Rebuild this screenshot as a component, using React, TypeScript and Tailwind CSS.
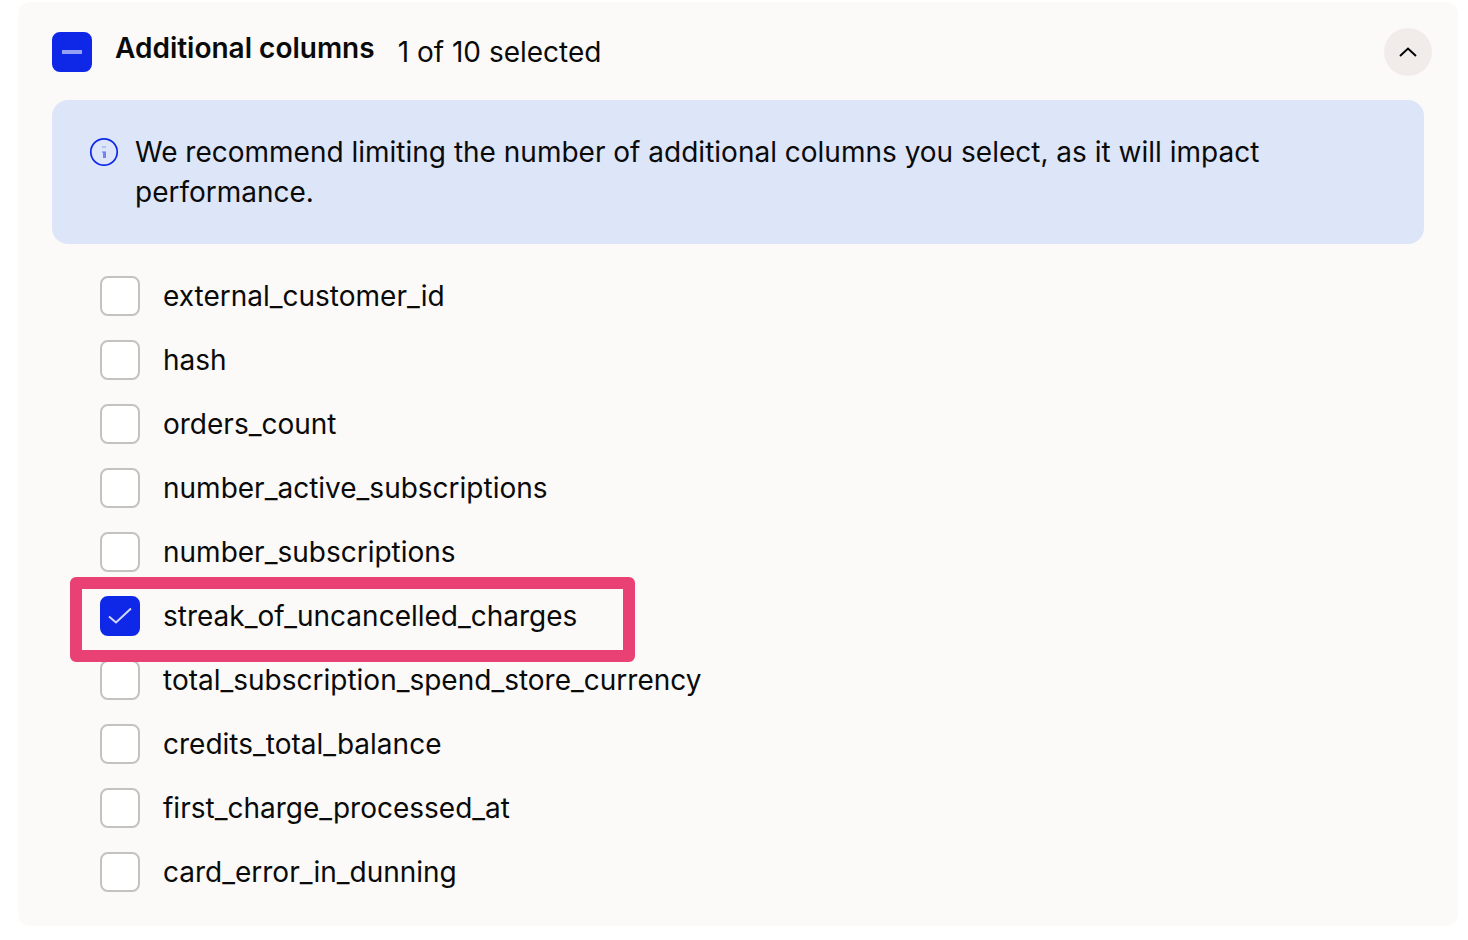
import React, { useEffect, useRef, useState } from 'react';

const columns = [
  'external_customer_id',
  'hash',
  'orders_count',
  'number_active_subscriptions',
  'number_subscriptions',
  'streak_of_uncancelled_charges',
  'total_subscription_spend_store_currency',
  'credits_total_balance',
  'first_charge_processed_at',
  'card_error_in_dunning',
];

const highlighted = 'streak_of_uncancelled_charges';

type CheckboxProps = {
  id: string;
  checked: boolean;
  indeterminate?: boolean;
  onChange: () => void;
};

function Checkbox({ id, checked, indeterminate = false, onChange }: CheckboxProps) {
  const ref = useRef<HTMLInputElement>(null);

  useEffect(() => {
    if (ref.current) ref.current.indeterminate = indeterminate;
  }, [indeterminate]);

  return (
    <span className="relative block h-10 w-10 shrink-0">
      <input
        ref={ref}
        id={id}
        type="checkbox"
        checked={checked}
        onChange={onChange}
        className="block h-10 w-10 appearance-none rounded-lg border-2 border-[#c4c2c0] bg-white checked:border-[#0f28e8] checked:bg-[#0f28e8] indeterminate:border-[#0f28e8] indeterminate:bg-[#0f28e8]"
      />
      {(checked || indeterminate) && (
        <svg viewBox="0 0 40 40" fill="none" className="pointer-events-none absolute inset-0 h-10 w-10">
          {indeterminate ? (
            <path d="M10 20h20" stroke="#959ff4" strokeWidth="4" />
          ) : (
            <path d="M9 20.5l7 6L31 12.5" stroke="#d4d8fb" strokeWidth="2" />
          )}
        </svg>
      )}
    </span>
  );
}

export default function App() {
  const [selected, setSelected] = useState<string[]>([highlighted]);
  const [open, setOpen] = useState(true);

  const allSelected = selected.length === columns.length;

  const toggle = (name: string) => {
    setSelected((prev) => (prev.includes(name) ? prev.filter((c) => c !== name) : [...prev, name]));
  };

  return (
    <div className="min-h-screen bg-white pt-[2px] pr-[10px] pb-[14px] pl-[18px] font-['Inter',sans-serif] text-[28px] leading-10 text-[#0a0a0a]">
      <section className="rounded-xl bg-[#fbfaf8] px-[34px] pt-[26px] pb-[34px]">
        {/* Header */}
        <div className="flex items-center">
          <Checkbox
            id="all-columns"
            checked={allSelected}
            indeterminate={selected.length > 0 && !allSelected}
            onChange={() => setSelected(allSelected ? [] : columns)}
          />
          <label htmlFor="all-columns" className="mb-2 pl-[23px] font-semibold">
            Additional columns
          </label>
          <span className="pl-[23px]">
            {selected.length} of {columns.length} selected
          </span>
          <button
            type="button"
            aria-label="Toggle additional columns"
            aria-expanded={open}
            onClick={() => setOpen(!open)}
            className="-mr-2 ml-auto flex h-12 w-12 items-center justify-center rounded-full bg-[#f1ecea]"
          >
            <svg viewBox="0 0 24 24" fill="none" className="h-6 w-6">
              <path d="M4 16l8-7.5 8 7.5" stroke="#000" strokeWidth="1.9" />
            </svg>
          </button>
        </div>

        {open && (
          <>
            {/* Performance notice */}
            <div className="mt-6 flex gap-[15px] rounded-2xl bg-[#dde5f8] px-9 py-8">
              <svg viewBox="0 0 32 32" fill="none" className="mt-1 h-8 w-8 shrink-0">
                <circle cx="16" cy="16" r="13.2" stroke="#0f28e8" strokeWidth="1.7" />
                <path d="M14 11h4" stroke="#b4bff7" strokeWidth="2" />
                <path d="M14 16h4" stroke="#a0acf5" strokeWidth="2" />
                <path d="M16.5 16v6" stroke="#7583f0" strokeWidth="3" />
              </svg>
              <p>
                We recommend limiting the number of additional columns you select, as it will impact
                performance.
              </p>
            </div>

            {/* Column list */}
            <ul className="mt-8 space-y-6 pl-12">
              {columns.map((name) => (
                <li key={name} className="relative flex w-fit items-center">
                  <Checkbox id={name} checked={selected.includes(name)} onChange={() => toggle(name)} />
                  <label htmlFor={name} className="pl-[23px]">
                    {name}
                  </label>
                  {name === highlighted && (
                    <div className="pointer-events-none absolute -top-[19px] -right-[58px] -bottom-[26px] -left-[30px] z-10 rounded-md border-12 border-[#e94174]" />
                  )}
                </li>
              ))}
            </ul>
          </>
        )}
      </section>
    </div>
  );
}
